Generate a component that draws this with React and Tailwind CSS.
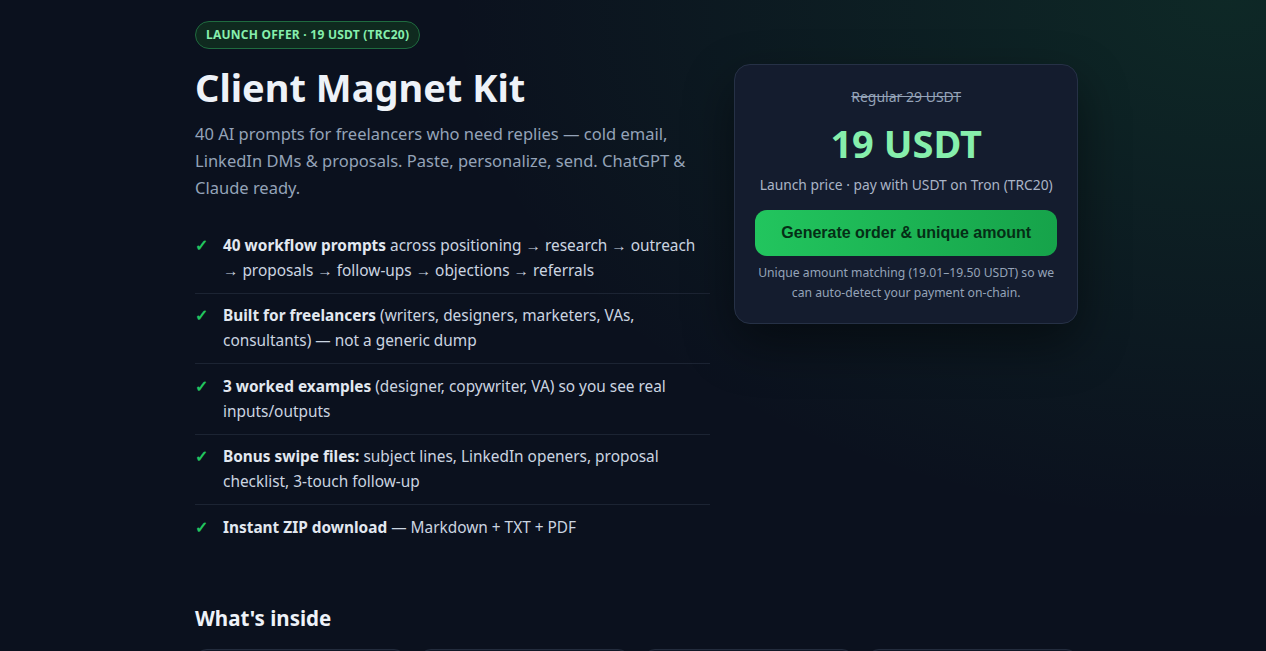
import React from "react";

const features = [
  { bold: "40 workflow prompts", rest: " across positioning → research → outreach → proposals → follow-ups → objections → referrals" },
  { bold: "Built for freelancers", rest: " (writers, designers, marketers, VAs, consultants) — not a generic dump" },
  { bold: "3 worked examples", rest: " (designer, copywriter, VA) so you see real inputs/outputs" },
  { bold: "Bonus swipe files:", rest: " subject lines, LinkedIn openers, proposal checklist, 3-touch follow-up" },
  { bold: "Instant ZIP download", rest: " — Markdown + TXT + PDF" },
];

const App = () => {
  return (
    <div className="min-h-screen bg-[#0b111e] bg-[radial-gradient(ellipse_at_97%_0%,rgba(34,197,94,0.13),transparent_45%)] font-['Noto_Sans',sans-serif] text-[#e2e8f0]">
      <div className="mx-auto max-w-[890px] pl-[7px] pt-[21px] pb-16">
        <div className="grid grid-cols-[1.5fr_1fr] gap-6">
          {/* Left column */}
          <div>
            <span className="inline-flex h-[28px] items-center rounded-full border border-[#1f6b3f] bg-[#0f2a1f] px-[10px] text-[12px] font-bold tracking-[0.02em] text-[#86efac]">
              LAUNCH OFFER · 19 USDT (TRC20)
            </span>
            <h1 className="mt-[15px] text-[38px] font-bold leading-[46px] text-[#eef2f8]">Client Magnet Kit</h1>
            <p className="mt-[10px] text-[16.5px] leading-[27px] text-[#94a3b8]">
              40 AI prompts for freelancers who need replies — cold email, LinkedIn DMs &amp; proposals. Paste, personalize, send. ChatGPT &amp; Claude ready.
            </p>
            <ul className="mt-[22px]">
              {features.map((f, i) => (
                <li
                  key={i}
                  className={`flex gap-[16px] py-[9.75px] text-[15.4px] leading-[25px] text-[#cbd5e1] ${i < features.length - 1 ? "border-b border-[#1c2433]" : ""}`}
                >
                  <span className="w-[12px] shrink-0 text-[16px] font-bold text-[#22c55e]">✓</span>
                  <span>
                    <b className="font-bold text-[#e2e8f0]">{f.bold}</b>
                    {f.rest}
                  </span>
                </li>
              ))}
            </ul>
          </div>

          {/* Price card */}
          <div className="pt-[43px]">
            <div className="rounded-2xl border border-[#263146] bg-[#141c2e] p-5 text-center shadow-[0_20px_50px_rgba(0,0,0,0.45)]">
              <div className="text-[14px] leading-[24px] text-[#94a3b8] line-through">Regular 29 USDT</div>
              <div className="mt-[11px] text-[38px] font-bold leading-[46px] text-[#86efac]">19 USDT</div>
              <div className="mt-[9px] text-[13.8px] leading-[20px] text-[#aab4c6]">Launch price · pay with USDT on Tron (TRC20)</div>
              <button className="mt-[15px] h-[46px] w-full rounded-xl bg-gradient-to-r from-[#22c55e] to-[#16a34a] font-['Liberation_Sans',Arial,sans-serif] text-[16px] font-bold text-[#052e16]">
                Generate order &amp; unique amount
              </button>
              <p className="mt-[7px] text-[12.2px] leading-[20px] text-[#94a3b8]">
                Unique amount matching (19.01–19.50 USDT) so we can auto-detect your payment on-chain.
              </p>
            </div>
          </div>
        </div>

        {/* What's inside */}
        <h2 className="mt-[54px] text-[20.5px] font-bold leading-[28px] text-[#eef2f8]">What's inside</h2>
        <div className="mt-[17px] grid grid-cols-4 gap-[13px]">
          {[0, 1, 2, 3].map((n) => (
            <div key={n} className="h-28 rounded-xl border border-[#232c3d] bg-[#111827]" />
          ))}
        </div>
      </div>
    </div>
  );
};

export default App;
